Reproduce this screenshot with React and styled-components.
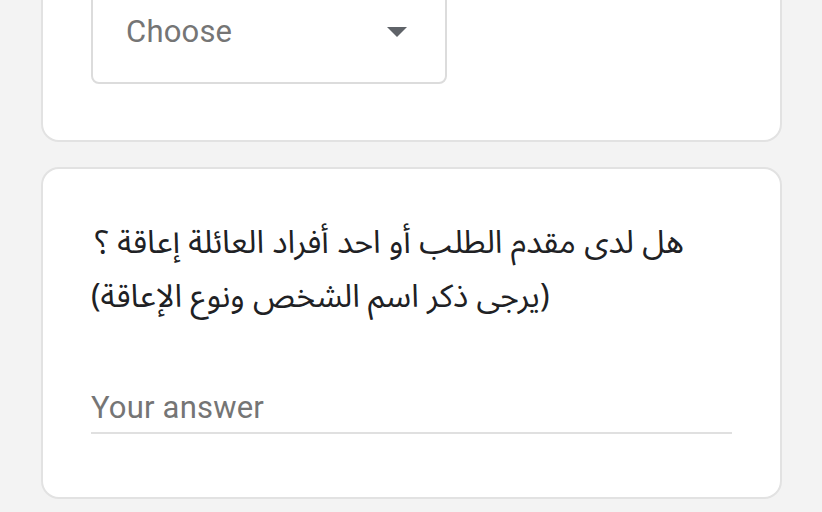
import React from "react";
import styled, { createGlobalStyle } from "styled-components";

const Global = createGlobalStyle`
  html, body { margin: 0; padding: 0; background: #f3f3f3; }
  body { font-family: Roboto, "Noto Sans", sans-serif; overflow: hidden; }
`;

const Page = styled.main`
  display: flex;
  flex-direction: column;
  gap: 25px;
  padding: 0 40px 0 41px;
  margin-top: -59px;
`;

const Card = styled.section`
  background: #fff;
  border: 2px solid #e2e2e2;
  border-radius: 18px;
  padding: ${(p) => p.$pad};
`;

const Select = styled.div`
  width: 356px;
  height: 105px;
  box-sizing: border-box;
  border: 2px solid #dcdcdc;
  border-radius: 8px;
  display: flex;
  align-items: center;
  justify-content: space-between;
  padding: 0 38px 0 33px;
`;

const Placeholder = styled.span`
  font-family: Roboto, sans-serif;
  font-size: 31px;
  color: #757575;
  letter-spacing: 0.2px;
`;

const Arrow = styled.svg`
  width: 20px;
  height: 10px;
  flex: none;
`;

const Question = styled.div`
  direction: rtl;
  text-align: left;
  font-family: "Noto Sans Arabic", "Noto Sans Arabic UI", "Noto Naskh Arabic", "DejaVu Sans", sans-serif;
  font-size: 32px;
  line-height: 54px;
  color: #202124;
`;

const Line = styled.div`
  padding-left: ${(p) => p.$indent || 0}px;
  white-space: nowrap;
`;

const Answer = styled.div`
  margin-top: 62px;
  height: 48px;
  border-bottom: 2px solid #e0e0e0;
  display: flex;
  align-items: flex-end;
  padding-bottom: 6px;
  box-sizing: border-box;
`;

export default function App() {
  return (
    <>
      <Global />
      <Page>
        <Card $pad="36px 48px 56px 48px">
          <Select>
            <Placeholder>Choose</Placeholder>
            <Arrow viewBox="0 0 20 10">
              <path d="M0 0 L20 0 L10 10 Z" fill="#5f6368" />
            </Arrow>
          </Select>
        </Card>
        <Card $pad="47px 48px 63px 48px">
          <Question>
            <Line $indent={4}>هل لدى مقدم الطلب أو احد أفراد العائلة إعاقة ؟</Line>
            <Line>(يرجى ذكر اسم الشخص ونوع الإعاقة)</Line>
          </Question>
          <Answer>
            <Placeholder>Your answer</Placeholder>
          </Answer>
        </Card>
      </Page>
    </>
  );
}
